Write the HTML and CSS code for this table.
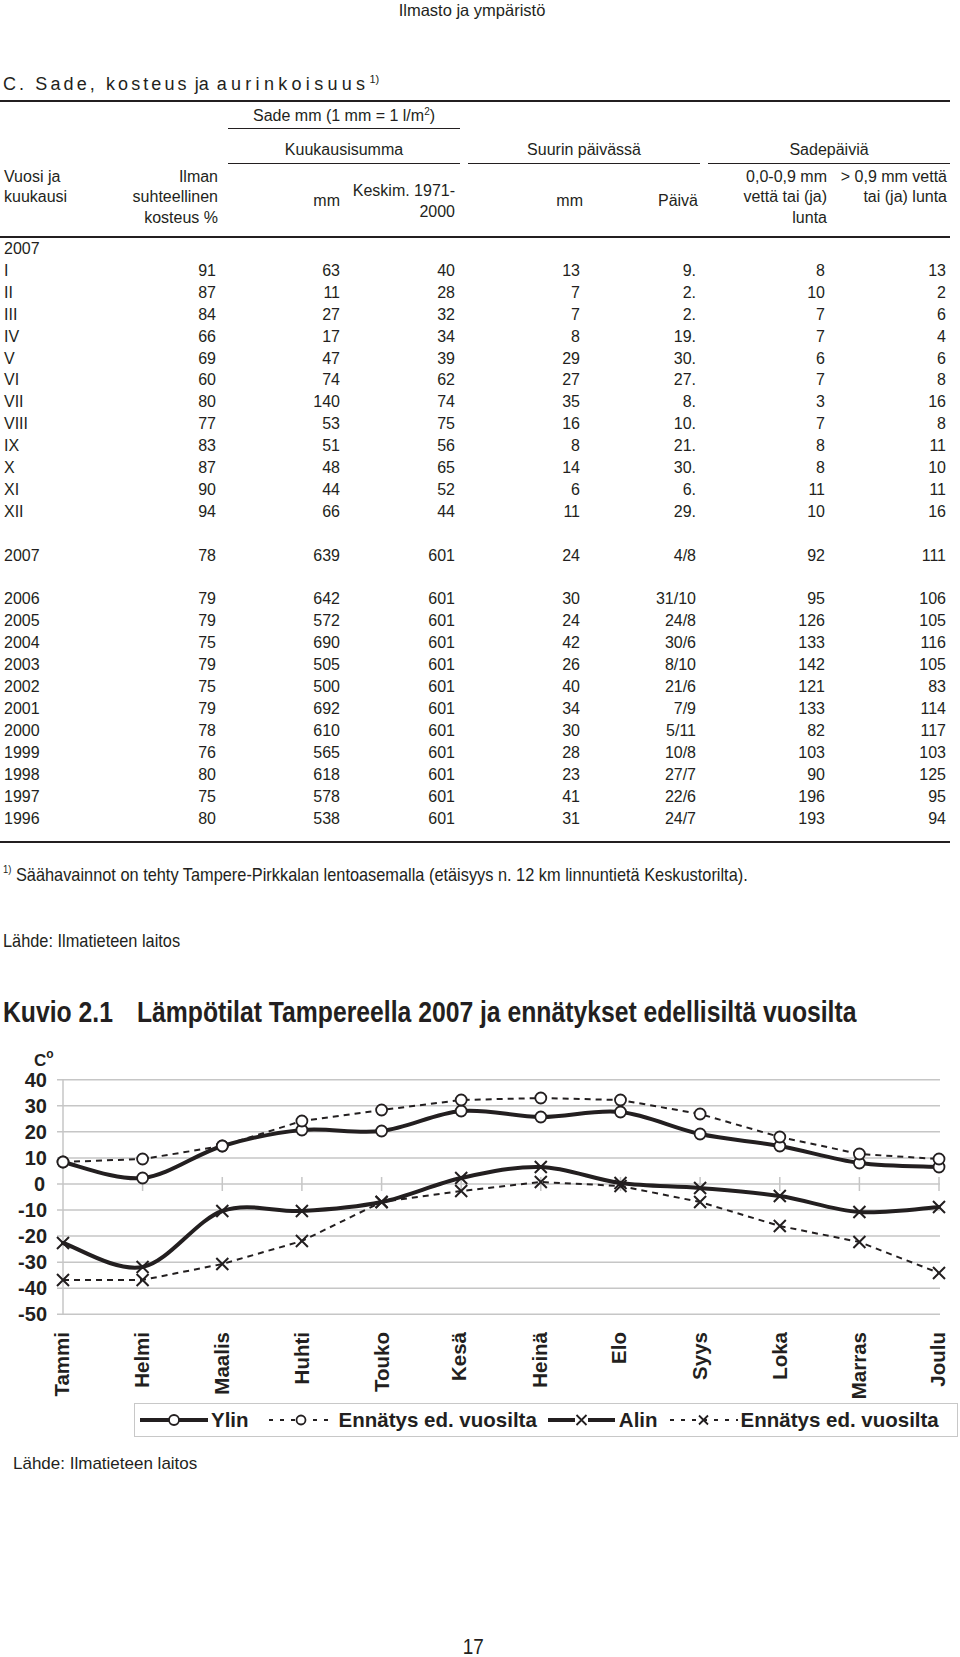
FILE: index.html
```html
<!DOCTYPE html>
<html lang="fi">
<head>
<meta charset="utf-8">
<title>Ilmasto ja ympäristö</title>
<link rel="stylesheet" href="styles.css">
</head>
<body>
<div class="running-head">Ilmasto ja ympäristö</div>

<h2 class="table-title"><span class="sp1">C. Sade, kosteus</span> ja <span class="sp2">aurinkoisuus</span><sup>1)</sup></h2>

<div class="table-wrap">
<table class="stats">
  <colgroup>
    <col class="w1"><col class="w2"><col class="w3"><col class="w4"><col class="w5"><col class="w6"><col class="w7"><col class="w8">
  </colgroup>
  <thead>
    <tr class="h1">
      <th colspan="2"></th>
      <th colspan="2" class="grp"><div>Sade mm (1 mm = 1 l/m<sup>2</sup>)</div></th>
      <th colspan="4"></th>
    </tr>
    <tr class="h2">
      <th colspan="2"></th>
      <th colspan="2" class="grp"><div>Kuukausisumma</div></th>
      <th colspan="2" class="grp"><div>Suurin päivässä</div></th>
      <th colspan="2" class="grp last"><div>Sadepäiviä</div></th>
    </tr>
    <tr class="h3">
      <th class="c1">Vuosi ja<br>kuukausi</th>
      <th class="c2">Ilman<br>suhteellinen<br>kosteus %</th>
      <th class="c3 mid">mm</th>
      <th class="c4 mid">Keskim. 1971-<br>2000</th>
      <th class="c5 mid">mm</th>
      <th class="c6 mid">Päivä</th>
      <th class="c7">0,0-0,9 mm<br>vettä tai (ja)<br>lunta</th>
      <th class="c8">&gt; 0,9 mm vettä<br>tai (ja) lunta</th>
    </tr>
  </thead>
  <tbody>
    <tr><td>2007</td><td></td><td></td><td></td><td></td><td></td><td></td><td></td></tr>
    <tr><td>I</td><td>91</td><td>63</td><td>40</td><td>13</td><td>9.</td><td>8</td><td>13</td></tr>
    <tr><td>II</td><td>87</td><td>11</td><td>28</td><td>7</td><td>2.</td><td>10</td><td>2</td></tr>
    <tr><td>III</td><td>84</td><td>27</td><td>32</td><td>7</td><td>2.</td><td>7</td><td>6</td></tr>
    <tr><td>IV</td><td>66</td><td>17</td><td>34</td><td>8</td><td>19.</td><td>7</td><td>4</td></tr>
    <tr><td>V</td><td>69</td><td>47</td><td>39</td><td>29</td><td>30.</td><td>6</td><td>6</td></tr>
    <tr><td>VI</td><td>60</td><td>74</td><td>62</td><td>27</td><td>27.</td><td>7</td><td>8</td></tr>
    <tr><td>VII</td><td>80</td><td>140</td><td>74</td><td>35</td><td>8.</td><td>3</td><td>16</td></tr>
    <tr><td>VIII</td><td>77</td><td>53</td><td>75</td><td>16</td><td>10.</td><td>7</td><td>8</td></tr>
    <tr><td>IX</td><td>83</td><td>51</td><td>56</td><td>8</td><td>21.</td><td>8</td><td>11</td></tr>
    <tr><td>X</td><td>87</td><td>48</td><td>65</td><td>14</td><td>30.</td><td>8</td><td>10</td></tr>
    <tr><td>XI</td><td>90</td><td>44</td><td>52</td><td>6</td><td>6.</td><td>11</td><td>11</td></tr>
    <tr><td>XII</td><td>94</td><td>66</td><td>44</td><td>11</td><td>29.</td><td>10</td><td>16</td></tr>
    <tr class="gap"><td colspan="8"></td></tr>
    <tr><td>2007</td><td>78</td><td>639</td><td>601</td><td>24</td><td>4/8</td><td>92</td><td>111</td></tr>
    <tr class="gap"><td colspan="8"></td></tr>
    <tr><td>2006</td><td>79</td><td>642</td><td>601</td><td>30</td><td>31/10</td><td>95</td><td>106</td></tr>
    <tr><td>2005</td><td>79</td><td>572</td><td>601</td><td>24</td><td>24/8</td><td>126</td><td>105</td></tr>
    <tr><td>2004</td><td>75</td><td>690</td><td>601</td><td>42</td><td>30/6</td><td>133</td><td>116</td></tr>
    <tr><td>2003</td><td>79</td><td>505</td><td>601</td><td>26</td><td>8/10</td><td>142</td><td>105</td></tr>
    <tr><td>2002</td><td>75</td><td>500</td><td>601</td><td>40</td><td>21/6</td><td>121</td><td>83</td></tr>
    <tr><td>2001</td><td>79</td><td>692</td><td>601</td><td>34</td><td>7/9</td><td>133</td><td>114</td></tr>
    <tr><td>2000</td><td>78</td><td>610</td><td>601</td><td>30</td><td>5/11</td><td>82</td><td>117</td></tr>
    <tr><td>1999</td><td>76</td><td>565</td><td>601</td><td>28</td><td>10/8</td><td>103</td><td>103</td></tr>
    <tr><td>1998</td><td>80</td><td>618</td><td>601</td><td>23</td><td>27/7</td><td>90</td><td>125</td></tr>
    <tr><td>1997</td><td>75</td><td>578</td><td>601</td><td>41</td><td>22/6</td><td>196</td><td>95</td></tr>
    <tr><td>1996</td><td>80</td><td>538</td><td>601</td><td>31</td><td>24/7</td><td>193</td><td>94</td></tr>
    <tr class="end"><td colspan="8"></td></tr>
  </tbody>
</table>
</div>

<div class="note-line"><p class="footnote narrow"><sup>1)</sup> Säähavainnot on tehty Tampere-Pirkkalan lentoasemalla (etäisyys n. 12 km linnuntietä Keskustorilta).</p></div>
<div class="note-line src"><p class="source narrow">Lähde: Ilmatieteen laitos</p></div>

<div class="fig-line"><h2 class="figure-title narrow"><span class="fig-no">Kuvio 2.1</span><span>Lämpötilat Tampereella 2007 ja ennätykset edellisiltä vuosilta</span></h2></div>

<div class="chart">
<svg class="plot" width="960" height="362" viewBox="0 0 960 362">
  <defs>
    <path id="xm" d="M-6,-6L6,6M6,-6L-6,6"/>
  </defs>
  <path class="grid" d="M57 40.7H940M57 66.8H940M57 92.8H940M57 118.9H940M57 145H940M57 171.1H940M57 197.1H940M57 223.2H940M57 249.3H940M57 275.3H940"/>
  <path class="grid" d="M63 40.7V275.3"/>
  <path class="grid" d="M142.6 138V152M222.3 138V152M301.9 138V152M381.6 138V152M461.2 138V152M540.8 138V152M620.5 138V152M700.1 138V152M779.8 138V152M859.4 138V152M939 138V152"/>

  <text class="unit" x="34" y="27">C<tspan class="deg" dy="-8">o</tspan></text>

  <g class="ylab">
    <text x="47" y="47.7">40</text>
    <text x="47" y="73.8">30</text>
    <text x="47" y="99.8">20</text>
    <text x="47" y="125.9">10</text>
    <text x="45" y="152">0</text>
    <text x="47" y="178.1">-10</text>
    <text x="47" y="204.1">-20</text>
    <text x="47" y="230.2">-30</text>
    <text x="47" y="256.3">-40</text>
    <text x="47" y="282.3">-50</text>
  </g>

  <g class="mlab">
    <text transform="translate(69.3 293) rotate(-90)">Tammi</text>
    <text transform="translate(149.3 293) rotate(-90)">Helmi</text>
    <text transform="translate(229.3 293) rotate(-90)">Maalis</text>
    <text transform="translate(309.3 293) rotate(-90)">Huhti</text>
    <text transform="translate(389.3 293) rotate(-90)">Touko</text>
    <text transform="translate(466.3 293) rotate(-90)">Kesä</text>
    <text transform="translate(547.3 293) rotate(-90)">Heinä</text>
    <text transform="translate(626.3 293) rotate(-90)">Elo</text>
    <text transform="translate(707.3 293) rotate(-90)">Syys</text>
    <text transform="translate(787.3 293) rotate(-90)">Loka</text>
    <text transform="translate(866.3 293) rotate(-90)">Marras</text>
    <text transform="translate(945.3 293) rotate(-90)">Joulu</text>
  </g>

  <!-- Ylin -->
  <path class="solid" d="M63,123C76.3,125.7 116.1,141.7 142.6,139C169.2,136.3 195.8,115 222.3,107C248.9,99 275.4,93.5 301.9,91C328.5,88.5 355.1,95.2 381.6,92C408.2,88.8 434.7,74.3 461.2,72C487.8,69.7 514.3,77.8 540.8,78C567.4,78.2 594,70.2 620.5,73C647.1,75.8 673.6,89.3 700.1,95C726.7,100.7 753.3,102.2 779.8,107C806.4,111.8 832.9,120.5 859.4,124C886,127.5 925.7,127.3 939,128"/>
  <g class="circ">
    <circle cx="63" cy="123" r="5.5"/><circle cx="142.6" cy="139" r="5.5"/><circle cx="222.3" cy="107" r="5.5"/><circle cx="301.9" cy="91" r="5.5"/><circle cx="381.6" cy="92" r="5.5"/><circle cx="461.2" cy="72" r="5.5"/><circle cx="540.8" cy="78" r="5.5"/><circle cx="620.5" cy="73" r="5.5"/><circle cx="700.1" cy="95" r="5.5"/><circle cx="779.8" cy="107" r="5.5"/><circle cx="859.4" cy="124" r="5.5"/><circle cx="939" cy="128" r="5.5"/>
  </g>

  <!-- Ennätys ylin -->
  <polyline class="dash" points="63,123 142.6,120 222.3,107 301.9,82 381.6,71 461.2,61 540.8,59 620.5,61 700.1,75 779.8,98 859.4,115 939,120"/>
  <g class="circ">
    <circle cx="63" cy="123" r="5.5"/><circle cx="142.6" cy="120" r="5.5"/><circle cx="222.3" cy="107" r="5.5"/><circle cx="301.9" cy="82" r="5.5"/><circle cx="381.6" cy="71" r="5.5"/><circle cx="461.2" cy="61" r="5.5"/><circle cx="540.8" cy="59" r="5.5"/><circle cx="620.5" cy="61" r="5.5"/><circle cx="700.1" cy="75" r="5.5"/><circle cx="779.8" cy="98" r="5.5"/><circle cx="859.4" cy="115" r="5.5"/><circle cx="939" cy="120" r="5.5"/>
  </g>

  <!-- Alin -->
  <path class="solid" d="M63,204C76.3,208 116.1,233.3 142.6,228C169.2,222.7 195.8,181.3 222.3,172C248.9,162.7 275.4,173.5 301.9,172C328.5,170.5 355.1,168.5 381.6,163C408.2,157.5 434.7,144.8 461.2,139C487.8,133.2 514.3,127.2 540.8,128C567.4,128.8 594,140.5 620.5,144C647.1,147.5 673.6,146.8 700.1,149C726.7,151.2 753.3,153 779.8,157C806.4,161 832.9,171.2 859.4,173C886,174.8 925.7,168.8 939,168"/>
  <g class="xs">
    <use href="#xm" x="63" y="204"/><use href="#xm" x="142.6" y="228"/><use href="#xm" x="222.3" y="172"/><use href="#xm" x="301.9" y="172"/><use href="#xm" x="381.6" y="163"/><use href="#xm" x="461.2" y="139"/><use href="#xm" x="540.8" y="128"/><use href="#xm" x="620.5" y="144"/><use href="#xm" x="700.1" y="149"/><use href="#xm" x="779.8" y="157"/><use href="#xm" x="859.4" y="173"/><use href="#xm" x="939" y="168"/>
  </g>

  <!-- Ennätys alin -->
  <polyline class="dash" points="63,241 142.6,241 222.3,225 301.9,202 381.6,163 461.2,152 540.8,143 620.5,147 700.1,163 779.8,187 859.4,203 939,234"/>
  <g class="xs">
    <use href="#xm" x="63" y="241"/><use href="#xm" x="142.6" y="241"/><use href="#xm" x="222.3" y="225"/><use href="#xm" x="301.9" y="202"/><use href="#xm" x="381.6" y="163"/><use href="#xm" x="461.2" y="152"/><use href="#xm" x="540.8" y="143"/><use href="#xm" x="620.5" y="147"/><use href="#xm" x="700.1" y="163"/><use href="#xm" x="779.8" y="187"/><use href="#xm" x="859.4" y="203"/><use href="#xm" x="939" y="234"/>
  </g>
</svg>

<div class="legend">
  <svg class="sw sw1" width="68" height="16" viewBox="0 0 68 16"><path class="lg-solid" d="M0 8H68"/><circle class="lg-circ" cx="34" cy="8" r="5"/></svg>
  <span class="lg-text t1">Ylin</span>
  <svg class="sw sw2" width="66" height="16" viewBox="0 0 66 16"><path class="lg-dash" d="M1 8H66"/><circle class="lg-circ" cx="33" cy="8" r="4.5"/></svg>
  <span class="lg-text t2">Ennätys ed. vuosilta</span>
  <svg class="sw sw3" width="67" height="16" viewBox="0 0 67 16"><path class="lg-solid" d="M0 8H27M40 8H67"/><path class="lg-x" d="M28.5 3L38.5 13M38.5 3L28.5 13"/></svg>
  <span class="lg-text t3">Alin</span>
  <svg class="sw sw4" width="69" height="16" viewBox="0 0 69 16"><path class="lg-dash" d="M1 8H69"/><path class="lg-x" d="M30 3.5L39 12.5M39 3.5L30 12.5"/></svg>
  <span class="lg-text t4">Ennätys ed. vuosilta</span>
</div>
</div>

<p class="source2">Lähde: Ilmatieteen laitos</p>

<div class="page-no"><span class="narrow">17</span></div>
</body>
</html>
```

FILE: styles.css
```css
* {
  box-sizing: border-box;
}

html,
body {
  margin: 0;
  padding: 0;
  background: #ffffff;
}

body {
  width: 960px;
  color: #231f20;
  font-family: "Liberation Sans", Arial, sans-serif;
  font-size: 16px;
}

/* condensed look (Arial Narrow is not installed): horizontally compressed Liberation Sans */
.narrow {
  transform-origin: 0 0;
}

/* running head */
.running-head {
  line-height: 20px;
  font-size: 16.5px;
  text-align: center;
  padding-right: 16px;
}

/* table title */
.table-title {
  margin: 53.3px 0 0 3px;
  font-size: 18px;
  font-weight: normal;
  line-height: 22px;
  white-space: nowrap;
}

.sp1 {
  letter-spacing: 3.1px;
}

.sp2 {
  letter-spacing: 4.3px;
  margin-left: 3px;
}

.table-title sup {
  font-size: 11px;
  line-height: 0;
  vertical-align: 7px;
  letter-spacing: 0;
}

/* statistics table */
.table-wrap {
  width: 950px;
  margin-top: 4.7px;
  border-top: 2px solid #231f20;
  border-bottom: 2px solid #231f20;
}

.stats {
  width: 950px;
  table-layout: fixed;
  border-collapse: separate;
  border-spacing: 0;
  font-size: 16px;
}

.w1 { width: 120px; }
.w2 { width: 102px; }
.w3 { width: 122px; }
.w4 { width: 118px; }
.w5 { width: 123px; }
.w6 { width: 117px; }
.w7 { width: 130px; }
.w8 { width: 118px; }

.stats th {
  padding: 0;
  font-weight: normal;
  text-align: right;
  white-space: nowrap;
}

.stats .h1 th {
  padding-top: 4px;
}

.stats .h2 th {
  padding-top: 11.5px;
}

.stats .grp div {
  margin: 0 2px 0 6px;
  line-height: 20px;
  text-align: center;
  border-bottom: 1.5px solid #231f20;
}

.stats .h1 .grp div {
  padding-bottom: 2px;
}

.stats .h2 .grp div {
  padding-bottom: 3px;
}

.stats .h2 .grp.last div {
  margin-right: 0;
}

.stats .grp sup {
  font-size: 10px;
  line-height: 0;
  vertical-align: 6px;
}

.stats .h3 th {
  line-height: 20.5px;
  padding-top: 2.5px;
  padding-bottom: 7.5px;
  border-bottom: 2px solid #231f20;
  vertical-align: top;
}

.stats .h3 th.mid {
  vertical-align: middle;
  padding-top: 6.5px;
  padding-bottom: 3.5px;
}

.stats .h3 .c1 { text-align: left; padding-left: 4px; }
.stats .h3 .c2 { padding-right: 4px; }
.stats .h3 .c3 { padding-right: 4px; }
.stats .h3 .c4 { padding-right: 7px; }
.stats .h3 .c5 { padding-right: 2px; }
.stats .h3 .c6 { padding-right: 4px; }
.stats .h3 .c7 { padding-right: 5px; }
.stats .h3 .c8 { padding-right: 3px; }

.stats td {
  padding: 0;
  height: 21.9px;
  line-height: 21.9px;
  text-align: right;
  white-space: nowrap;
}

.stats td:nth-child(1) { text-align: left; padding-left: 4px; }
.stats td:nth-child(2) { padding-right: 6px; }
.stats td:nth-child(3) { padding-right: 4px; }
.stats td:nth-child(4) { padding-right: 7px; }
.stats td:nth-child(5) { padding-right: 5px; }
.stats td:nth-child(6) { padding-right: 6px; }
.stats td:nth-child(7) { padding-right: 7px; }
.stats td:nth-child(8) { padding-right: 4px; }

.stats tr.end td {
  height: 11.7px;
  line-height: 0;
}

/* notes: wrappers clip the un-transformed layout box to the page width */
.note-line,
.fig-line {
  width: 960px;
  overflow: hidden;
}

.note-line {
  margin-top: 20.5px;
}

.note-line.src {
  margin-top: 44px;
}

.footnote {
  width: max-content;
  margin: 0 0 0 3px;
  font-size: 19px;
  line-height: 22px;
  white-space: nowrap;
  transform: scaleX(0.86);
}

.footnote sup {
  font-size: 11px;
  line-height: 0;
  vertical-align: 8px;
}

.source {
  width: max-content;
  margin: 0 0 0 3px;
  font-size: 19px;
  line-height: 22px;
  transform: scaleX(0.86);
}

/* figure */
.fig-line {
  margin-top: 43.3px;
}

.figure-title {
  width: max-content;
  margin: 0 0 0 3px;
  font-size: 30px;
  font-weight: bold;
  line-height: 34px;
  white-space: nowrap;
  display: flex;
  transform: scaleX(0.824);
}

.fig-no {
  width: 162.6px;
  flex: none;
}

.chart {
  margin-top: 10.2px;
}

.plot {
  display: block;
}

.grid {
  fill: none;
  stroke: #c6c6c6;
  stroke-width: 1.5;
}

.unit {
  font-family: "Liberation Sans", Arial, sans-serif;
  font-weight: bold;
  font-size: 17px;
  fill: #231f20;
}

.unit .deg {
  font-size: 12px;
}

.ylab text {
  font-family: "Liberation Sans", Arial, sans-serif;
  font-weight: bold;
  font-size: 20px;
  fill: #231f20;
  text-anchor: end;
}

.mlab text {
  font-family: "Liberation Sans", Arial, sans-serif;
  font-weight: bold;
  font-size: 20.5px;
  fill: #231f20;
  text-anchor: end;
}

.solid {
  fill: none;
  stroke: #231f20;
  stroke-width: 4;
  stroke-linecap: round;
  stroke-linejoin: round;
}

.dash {
  fill: none;
  stroke: #231f20;
  stroke-width: 2;
  stroke-dasharray: 6 5;
}

.circ circle {
  fill: #ffffff;
  stroke: #231f20;
  stroke-width: 1.8;
}

.xs use {
  fill: none;
  stroke: #231f20;
  stroke-width: 2;
}

/* legend */
.legend {
  display: flex;
  align-items: center;
  width: 824px;
  height: 34px;
  margin: 2px 0 0 134px;
  padding-left: 5px;
  border: 1px solid #c8c8c8;
  font-weight: bold;
  font-size: 20.5px;
  line-height: 24px;
  white-space: nowrap;
}

.sw {
  display: block;
  flex: none;
}

.lg-solid {
  fill: none;
  stroke: #231f20;
  stroke-width: 4;
}

.lg-dash {
  fill: none;
  stroke: #231f20;
  stroke-width: 2;
  stroke-dasharray: 4 7;
}

.lg-circ {
  fill: #ffffff;
  stroke: #231f20;
  stroke-width: 1.8;
}

.lg-x {
  fill: none;
  stroke: #231f20;
  stroke-width: 1.8;
}

.t1 { margin-left: 3px; }
.sw2 { margin-left: 19px; }
.t2 { margin-left: 5px; }
.sw3 { margin-left: 11px; }
.t3 { margin-left: 4px; }
.sw4 { margin-left: 11px; }
.t4 { margin-left: 3px; }

.source2 {
  margin: 16.5px 0 0 13px;
  font-size: 17px;
  line-height: 20px;
}

.page-no {
  margin-top: 164px;
  font-size: 22px;
  line-height: 18px;
  text-align: center;
  padding-right: 14px;
}

.page-no .narrow {
  display: inline-block;
  transform-origin: 50% 50%;
  transform: scaleX(0.86);
}
```
